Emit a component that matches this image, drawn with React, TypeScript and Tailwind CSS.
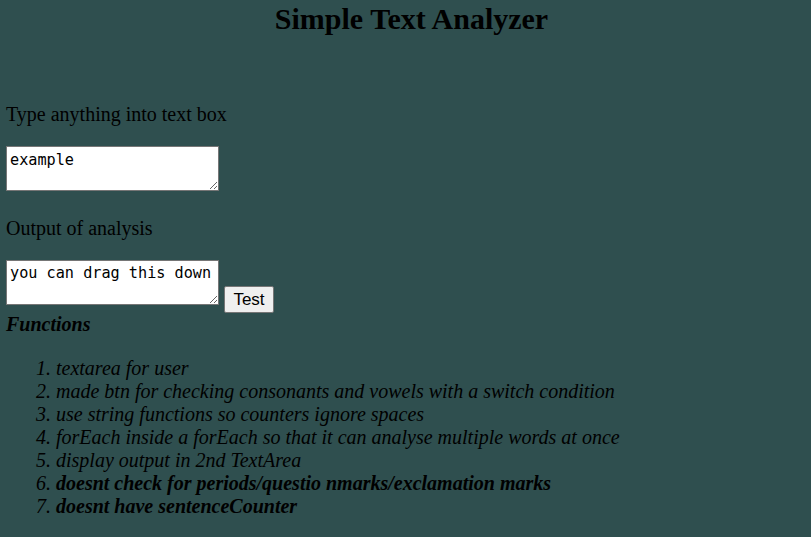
export default function App() {
  const items: { text: string; bold?: boolean }[] = [
    { text: "textarea for user" },
    { text: "made btn for checking consonants and vowels with a switch condition" },
    { text: "use string functions so counters ignore spaces" },
    { text: "forEach inside a forEach so that it can analyse multiple words at once" },
    { text: "display output in 2nd TextArea" },
    { text: "doesnt check for periods/questio nmarks/exclamation marks", bold: true },
    { text: "doesnt have sentenceCounter", bold: true },
  ];

  return (
    <div className="min-h-screen w-full bg-[#2f4f4f] text-black font-['Liberation_Serif',serif] text-[20px] leading-[23px]">
      {/* Title */}
      <h2 className="pt-[2px] pl-[12px] text-center text-[30px] leading-[34px] font-bold">
        Simple Text Analyzer
      </h2>

      <main className="px-[6px]">
        <p className="mt-[67px]">Type anything into text box</p>
        <textarea
          defaultValue="example"
          className="mt-[20px] block w-[213px] h-[45px] resize border border-[#767676] bg-white pl-[3px] pr-[2px] pt-[3px] font-['DejaVu_Sans_Mono',monospace] text-[15.2px] leading-[20px] text-black"
        />

        <p className="mt-[26px]">Output of analysis</p>
        <div className="mt-[20px] flex items-start">
          <textarea
            defaultValue="you can drag this down"
            className="block w-[213px] h-[45px] resize border border-[#767676] bg-white pl-[3px] pr-[2px] pt-[2px] font-['DejaVu_Sans_Mono',monospace] text-[15.2px] leading-[20px] text-black"
          />
          <button className="ml-[5px] mt-[26px] h-[27px] w-[50px] rounded-[2px] border border-[#767676] bg-[#efefef] font-['Liberation_Sans',sans-serif] text-[17px] leading-[20px] text-black">
            Test
          </button>
        </div>

        <p className="font-bold italic">Functions</p>
        <ol className="mt-[21px] list-decimal pl-[50px] italic">
          {items.map((item) => (
            <li key={item.text}>{item.bold ? <b>{item.text}</b> : item.text}</li>
          ))}
        </ol>
      </main>
    </div>
  );
}
